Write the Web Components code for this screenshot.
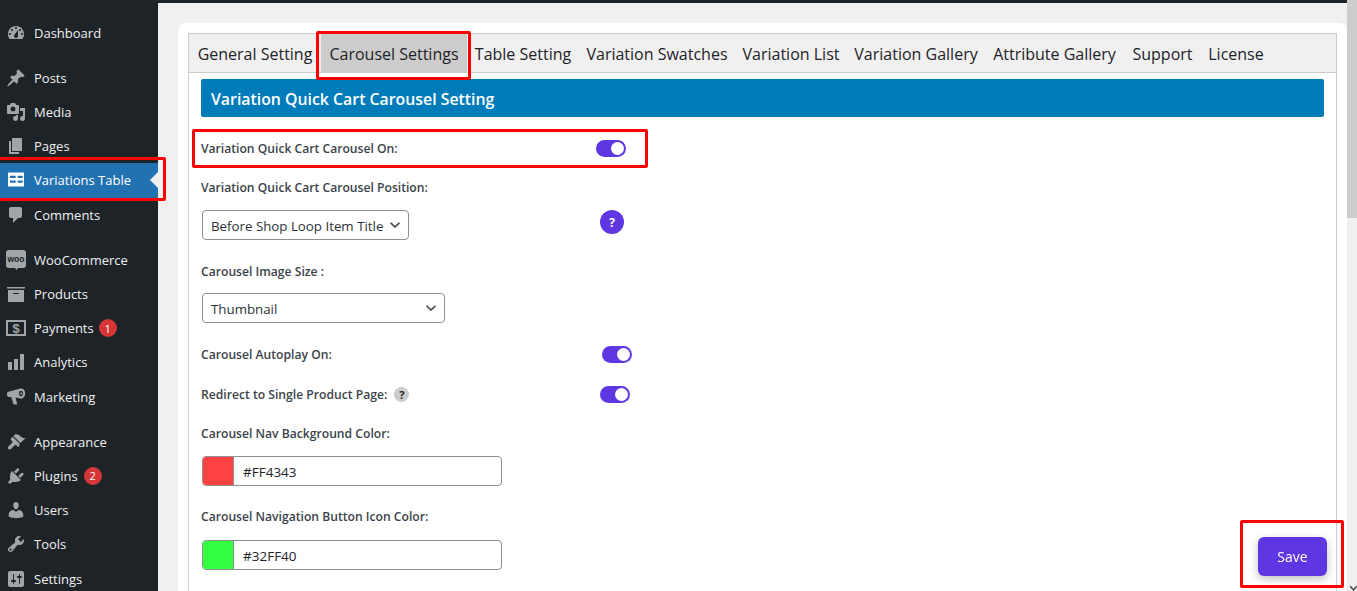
<!DOCTYPE html>
<html>
<head>
<meta charset="utf-8">
<title>Variations Table</title>
<style>
	html, body {
		margin: 0;
		height: 100%;
		overflow: hidden;
		background: #f0f0f1;
		font-family: "Open Sans", "Noto Sans", sans-serif;
	}
</style>
</head>
<body>

<wp-shell>
	<wp-sidebar slot="sidebar">
		<wp-item label="Dashboard" icon="dashboard"></wp-item>
		<wp-sep></wp-sep>
		<wp-item label="Posts" icon="pin"></wp-item>
		<wp-item label="Media" icon="media"></wp-item>
		<wp-item label="Pages" icon="pages"></wp-item>
		<wp-item label="Variations Table" icon="table" active></wp-item>
		<wp-item label="Comments" icon="comments"></wp-item>
		<wp-sep></wp-sep>
		<wp-item label="WooCommerce" icon="woo"></wp-item>
		<wp-item label="Products" icon="archive"></wp-item>
		<wp-item label="Payments" icon="payments" badge="1" style="--gap:5px"></wp-item>
		<wp-item label="Analytics" icon="bars"></wp-item>
		<wp-item label="Marketing" icon="megaphone"></wp-item>
		<wp-sep></wp-sep>
		<wp-item label="Appearance" icon="brush"></wp-item>
		<wp-item label="Plugins" icon="plugin" badge="2"></wp-item>
		<wp-item label="Users" icon="user"></wp-item>
		<wp-item label="Tools" icon="wrench"></wp-item>
		<wp-item label="Settings" icon="sliders"></wp-item>
	</wp-sidebar>

	<settings-card>
		<settings-tabs active="Carousel Settings" tabs="General Setting:132|Carousel Settings:146|Table Setting:112|Variation Swatches:156|Variation List:112|Variation Gallery:138|Attribute Gallery:139|Support:77|License:70"></settings-tabs>
		<section-head>Variation Quick Cart Carousel Setting</section-head>

		<form-row top="21" style="--at:395px">Variation Quick Cart Carousel On:<toggle-switch slot="control"></toggle-switch></form-row>
		<form-row top="19">Variation Quick Cart Carousel Position:</form-row>
		<select-box top="13" width="207" value="Before Shop Loop Item Title"><help-dot slot="after"></help-dot></select-box>
		<form-row top="21">Carousel Image Size :</form-row>
		<select-box top="12" width="243" value="Thumbnail"></select-box>
		<form-row top="21" style="--at:401px">Carousel Autoplay On:<toggle-switch slot="control"></toggle-switch></form-row>
		<form-row top="20" style="--at:399px">Redirect to Single Product Page:<help-dot small></help-dot><toggle-switch slot="control"></toggle-switch></form-row>
		<form-row top="19">Carousel Nav Background Color:</form-row>
		<color-field top="13" value="#FF4343"></color-field>
		<form-row top="20">Carousel Navigation Button Icon Color:</form-row>
		<color-field top="14" value="#32FF40"></color-field>
	</settings-card>

	<fake-scrollbar slot="scrollbar"></fake-scrollbar>
</wp-shell>

<save-button>Save</save-button>

<red-mark x="316" y="31" w="155" h="49"></red-mark>
<red-mark x="192" y="129" w="456" h="39"></red-mark>
<red-mark x="-6" y="157" w="172" h="44"></red-mark>
<red-mark x="1240" y="520" w="104" h="68"></red-mark>

<script>
// dashicons, same 20x20 box for all of them
const ICONS = {
	dashboard: '<path fill-rule="evenodd" d="M3.76 16h12.48c1.1-1.37 1.76-3.11 1.76-5 0-4.42-3.58-8-8-8s-8 3.58-8 8c0 1.89.66 3.63 1.76 5zM10 4c.55 0 1 .45 1 1s-.45 1-1 1-1-.45-1-1 .45-1 1-1zM6 6c.55 0 1 .45 1 1s-.45 1-1 1-1-.45-1-1 .45-1 1-1zm8 0c.55 0 1 .45 1 1s-.45 1-1 1-1-.45-1-1 .45-1 1-1zm-5.37 5.55L12 7v6c0 1.1-.9 2-2 2s-2-.9-2-2c0-.57.24-1.08.63-1.45zM4 10c.55 0 1 .45 1 1s-.45 1-1 1-1-.45-1-1 .45-1 1-1zm12 0c.55 0 1 .45 1 1s-.45 1-1 1-1-.45-1-1 .45-1 1-1z"/>',
	pin: '<path d="M10.44 3.02l1.82-1.82 6.36 6.35-1.83 1.82c-1.05-.68-2.48-.57-3.41.36l-.75.75c-.92.93-1.04 2.35-.35 3.41l-1.83 1.82-2.41-2.41-2.8 2.79c-.42.42-3.38 2.71-3.8 2.29s1.86-3.39 2.28-3.81l2.79-2.79L4.1 9.36l1.83-1.82c1.05.69 2.48.57 3.41-.36l.75-.75c.93-.92 1.04-2.35.35-3.41z"/>',
	media: '<path fill-rule="evenodd" d="M13 11V4c0-.55-.45-1-1-1h-1.67L9 1H5L3.67 3H2c-.55 0-1 .45-1 1v7c0 .55.45 1 1 1h10c.55 0 1-.45 1-1zM7 4.5c1.38 0 2.5 1.12 2.5 2.5S8.38 9.5 7 9.5 4.5 8.38 4.5 7 5.62 4.5 7 4.5zM14 6h5v10.5c0 1.38-1.12 2.5-2.5 2.5S14 17.88 14 16.5s1.12-2.5 2.5-2.5c.17 0 .34.02.5.05V9h-3V6zm-4 8.05V13h2v3.5c0 1.38-1.12 2.5-2.5 2.5S7 17.88 7 16.5 8.12 14 9.5 14c.17 0 .34.02.5.05z"/>',
	pages: '<path d="M6 15V2h10v13H6zm-1 1h8v2H3V5h2v11z"/>',
	table: '<path fill="#fff" fill-rule="evenodd" d="M2 2.500h16v14H2zM4 5.700V8h5.700V5.700zm7.700 0V8h5V5.700zM4 10.500v2.300h5.700v-2.300zm7.700 0v2.300h5v-2.300z"/>',
	comments: '<path d="M5 2h9c1.1 0 2 .9 2 2v7c0 1.1-.9 2-2 2h-2l-5 5v-5H5c-1.1 0-2-.9-2-2V4c0-1.1.9-2 2-2z"/>',
	woo: '<path d="M2.500 0h15C18.900 0 20 1.100 20 2.500v13c0 1.400-1.100 2.500-2.500 2.500H12l-1.600 2L9 18H2.500C1.100 18 0 16.900 0 15.500v-13C0 1.100 1.100 0 2.500 0z"/><text x="10" y="12" text-anchor="middle" font-family="Liberation Sans, sans-serif" font-weight="700" font-size="8.500" fill="#1d2327">woo</text>',
	archive: '<path fill-rule="evenodd" d="M19 3v1.500H1V3h18zM2 6h16v12H2V6zm11 4V9H7v1h6z"/>',
	payments: '<path fill-rule="evenodd" d="M0 2h20v16H0zM2 4v12h16V4z"/><text x="10" y="14.500" text-anchor="middle" font-family="Liberation Sans, sans-serif" font-weight="700" font-size="13">$</text>',
	bars: '<path d="M18 18V2h-4v16h4zm-6 0V7H8v11h4zm-6 0v-8H2v8h4z"/>',
	megaphone: '<path fill-rule="evenodd" d="M14.500 1.500c2.800-.7 4.700 1.700 4.700 4.700 0 2.900-1.500 5-3.700 5.500L9.500 10.500l1.600 6.200c.1.500-.2.800-.7.800H8.200c-.5 0-.8-.2-1-.7L5.300 10H3.200C1.700 10 1 9 1 7.600V6.800C1 5.400 2 4.600 3.300 4.500zM15 3.800c-1.200 0-2 1.200-2 2.700s.8 2.800 2 2.800 2-1.300 2-2.800-.8-2.700-2-2.700z"/><circle cx="15.100" cy="6.500" r="1.100"/>',
	brush: '<path d="M14.480 11.060L7.410 3.990l1.500-1.500c.5-.56 2.300-.47 3.510.32 1.210.8 1.430 1.280 2.910 2.100 1.180.64 2.450 1.260 4.450.85zm-.71.71L6.700 4.700 4.930 6.470c-.39.39-.39 1.020 0 1.410l1.060 1.060c.59.56.59 1.530 0 2.120l-3.530 3.530c-.67.66-.67 1.770 0 2.470.7.71 1.810.71 2.470 0l3.530-3.530c.59-.59 1.560-.59 2.120 0l1.060 1.060c.39.39 1.020.39 1.410 0z"/>',
	plugin: '<path d="M13.110 4.360L9.870 7.600 8 5.730l3.240-3.240c.35-.34 1.050-.2 1.560.32.52.51.66 1.210.31 1.550zm-8 1.770l.91-1.120 9.010 9.010-1.190.84c-.71.71-2.630 1.160-3.820 1.160H6.140L4.900 17.260c-.59.59-1.540.59-2.120 0-.59-.58-.59-1.530 0-2.120l1.240-1.240v-3.880c0-1.130.4-3.190 1.090-3.890zm7.260 3.970l3.240-3.240c.34-.35 1.040-.21 1.550.31.52.51.66 1.210.31 1.550l-3.240 3.250z"/>',
	user: '<path d="M10 9.250c-2.270 0-2.730-3.440-2.730-3.440C7 4.020 7.820 2 9.970 2c2.160 0 2.980 2.020 2.710 3.810 0 0-.41 3.440-2.680 3.440zm0 2.570L12.720 10c2.390 0 4.520 2.330 4.520 4.530v2.490s-3.650 1.130-7.240 1.130c-3.650 0-7.240-1.130-7.240-1.130v-2.490c0-2.250 1.940-4.480 4.470-4.480z"/>',
	wrench: '<path fill-rule="evenodd" d="M16.680 9.770c-1.340 1.340-3.300 1.670-4.950.99l-5.410 6.520c-.99.99-2.590.99-3.580 0s-.99-2.590 0-3.570l6.520-5.420c-.68-1.650-.35-3.610.99-4.950 1.280-1.280 3.120-1.620 4.720-1.060l-2.890 2.890 2.820 2.820 2.860-2.870c.53 1.580.18 3.390-1.080 4.650zM3.810 16.210c.4.39 1.040.39 1.430 0 .4-.4.4-1.040 0-1.430-.39-.4-1.030-.4-1.430 0-.39.39-.39 1.030 0 1.430z"/>',
	sliders: '<path fill-rule="evenodd" d="M18 16V4c0-1.100-.9-2-2-2H4c-1.100 0-2 .9-2 2v12c0 1.100.9 2 2 2h12c1.100 0 2-.9 2-2zM8 11h1c.55 0 1 .45 1 1s-.45 1-1 1H8v1.500c0 .28-.22.5-.5.5s-.5-.22-.5-.5V13H6c-.55 0-1-.45-1-1s.45-1 1-1h1V5.500c0-.28.22-.5.5-.5s.5.22.5.5V11zm5-2h-1c-.55 0-1-.45-1-1s.45-1 1-1h1V5.500c0-.28.22-.5.5-.5s.5.22.5.5V7h1c.55 0 1 .45 1 1s-.45 1-1 1h-1v5.500c0 .28-.22.5-.5.5s-.5-.22-.5-.5V9z"/>'
}

// small helper so every element below stays short
function define(name, render){
	customElements.define(name, class extends HTMLElement {
		connectedCallback(){
			if(this.shadowRoot) return
			const shadow = this.attachShadow({ mode: 'open' })
			shadow.innerHTML = render(this)
		}
	})
}

// ===== PAGE FRAME =====

define('wp-shell', () => `
	<style>
		:host { display: grid; grid-template-columns: 158px 1fr 10px; height: 591px; overflow: hidden; }
		.main { border-top: 3px solid #1d2327; padding: 20px 0 0 20px; min-width: 0; }
	</style>
	<slot name="sidebar"></slot>
	<div class="main"><slot></slot></div>
	<slot name="scrollbar"></slot>
`)

define('wp-sidebar', () => `
	<style>
		:host { display: block; background: #1d2327; padding-top: 15.6px; height: 591px; box-sizing: border-box; overflow: hidden; }
	</style>
	<slot></slot>
`)

define('wp-sep', () => `<style>:host { display: block; height: 10.75px; }</style>`)

define('wp-item', el => {
	const badge = el.getAttribute('badge')
	const active = el.hasAttribute('active')
	return `
	<style>
		:host { display: flex; align-items: center; height: 34.25px; position: relative; color: #f0f0f1; font-size: 13px; }
		:host([active]) { background: #2271b1; color: #fff; }
		svg { width: 20px; height: 20px; margin: 0 8px 0 6px; fill: #a0a5aa; flex: none; }
		.badge {
			width: 18px; height: 18px; border-radius: 50%; background: #d63638; color: #fff;
			font-size: 11px; display: flex; align-items: center; justify-content: center; margin-left: var(--gap, 6px);
		}
		.arrow {
			position: absolute; right: 0; top: 50%; margin-top: -8px;
			border: 8px solid transparent; border-right-color: #f0f0f1; border-left-width: 0;
		}
	</style>
	<svg viewBox="0 0 20 20">${ICONS[el.getAttribute('icon')]}</svg>
	<span>${el.getAttribute('label')}</span>
	${badge ? `<span class="badge">${badge}</span>` : ''}
	${active ? '<span class="arrow"></span>' : ''}
`})

define('fake-scrollbar', () => `
	<style>
		:host { display: block; position: relative; background: #f0f0f0; height: 591px; }
		.thumb { height: 218px; background: #cdcdcd; }
		svg { position: absolute; left: 3px; top: 584px; }
	</style>
	<div class="thumb"></div>
	<svg width="7" height="7" viewBox="0 0 7 7"><path d="M0 2l3.500 4L7 2" fill="none" stroke="#505050" stroke-width="1.500"/></svg>
`)

// ===== SETTINGS =====

define('settings-card', () => `
	<style>
		:host { display: block; background: #fff; border-radius: 8px 8px 0 0; padding: 10px 10px 0; height: 568px; box-sizing: border-box; overflow: hidden; }
		.box { border: 1px solid #ccc; border-bottom: 0; height: 100%; box-sizing: border-box; }
	</style>
	<div class="box"><slot></slot></div>
`)

define('settings-tabs', el => {
	const active = el.getAttribute('active')
	const tabs = el.getAttribute('tabs').split('|')
		.map(t => t.split(':'))
		.map(([name, width]) => `<span class="tab${name === active ? ' on' : ''}" style="width:${width}px">${name}</span>`)
		.join('')
	return `
	<style>
		:host { display: flex; height: 38px; background: #f0f0f0; border-bottom: 1px solid #ccc; color: #1d2327; font-size: 16px; }
		.tab { display: flex; align-items: center; justify-content: center; white-space: nowrap; padding-top: 2px; box-sizing: border-box; }
		.on { background: #ccc; }
	</style>
	${tabs}
`})

define('section-head', () => `
	<style>
		:host {
			display: flex; align-items: center; height: 38px; box-sizing: border-box; margin: 6px 12px 0; padding: 2px 0 0 10px;
			background: #007cba; color: #fff; font-size: 15.85px; font-weight: 600; border-radius: 2px;
		}
	</style>
	<slot></slot>
`)

define('form-row', el => `
	<style>
		:host {
			display: grid; grid-template-columns: var(--at, 395px) auto; justify-content: start; align-items: center;
			height: 20px; margin: ${el.getAttribute('top')}px 12px 0;
			color: #3c434a; font-size: 12.15px; font-weight: 600;
		}
		.label { display: flex; align-items: center; gap: 7px; white-space: pre; }
	</style>
	<div class="label"><slot></slot></div>
	<slot name="control"></slot>
`)

define('toggle-switch', () => `
	<style>
		:host { display: flex; justify-content: flex-end; align-items: center; width: 30px; height: 17px; padding: 0 2px; box-sizing: border-box; background: #5f37e2; border-radius: 9px; }
		i { width: 13px; height: 13px; border-radius: 50%; background: #fff; }
	</style>
	<i></i>
`)

define('help-dot', () => `<style>
		:host { display: flex; align-items: center; justify-content: center; width: 24px; height: 24px; border-radius: 50%; background: #5f37e2; color: #fff; font-size: 12px; font-weight: 700; white-space: normal; }
		:host([small]) { width: 15px; height: 15px; background: #ccc; color: #1d2327; font-size: 11px; }
		:host([slot="after"]) { position: absolute; left: 398px; top: 0; }
	</style>?`)

define('select-box', el => `
	<style>
		:host { display: block; position: relative; margin: ${el.getAttribute('top')}px 12px 0 13px; height: 30px; color: #2c3338; font-size: 13.3px; }
		.box {
			display: flex; align-items: center; justify-content: space-between;
			width: ${el.getAttribute('width')}px; height: 30px; box-sizing: border-box;
			border: 1px solid #8c8f94; border-radius: 4px; padding: 0 8px; background: #fff;
		}
		span { padding-top: 2px; }
	</style>
	<div class="box">
		<span>${el.getAttribute('value')}</span>
		<svg width="10" height="6" viewBox="0 0 10 6"><path d="M.5.8L5 5 9.500.8" fill="none" stroke="#50575e" stroke-width="1.800"/></svg>
	</div>
	<slot name="after"></slot>
`)

define('color-field', el => `
	<style>
		:host { display: flex; margin: ${el.getAttribute('top')}px 0 0 13px; width: 300px; height: 30px; box-sizing: border-box; border: 1px solid #8c8f94; border-radius: 4px; overflow: hidden; align-items: center; color: #1d2327; font-size: 13.5px; }
		i { width: 30px; height: 100%; background: ${el.getAttribute('value')}; border-right: 1px solid #8c8f94; margin-right: 9px; }
		span { padding-top: 2px; }
	</style>
	<i></i><span>${el.getAttribute('value')}</span>
`)

define('save-button', () => `
	<style>
		:host {
			position: fixed; left: 1258px; top: 537px; width: 69px; height: 39px;
			display: flex; align-items: center; justify-content: center;
			background: #5f37e2; color: #fff; font-size: 14px; border-radius: 6px;
			box-shadow: 0 3px 8px rgba(0,0,0,.25);
		}
	</style>
	<slot></slot>
`)

// the red annotation frames drawn on top of the screenshot
define('red-mark', el => `
	<style>
		:host {
			position: fixed; box-sizing: border-box; border: 3px solid #f00; border-radius: 2px;
			left: ${el.getAttribute('x')}px; top: ${el.getAttribute('y')}px;
			width: ${el.getAttribute('w')}px; height: ${el.getAttribute('h')}px;
		}
	</style>
`)
</script>
</body>
</html>
